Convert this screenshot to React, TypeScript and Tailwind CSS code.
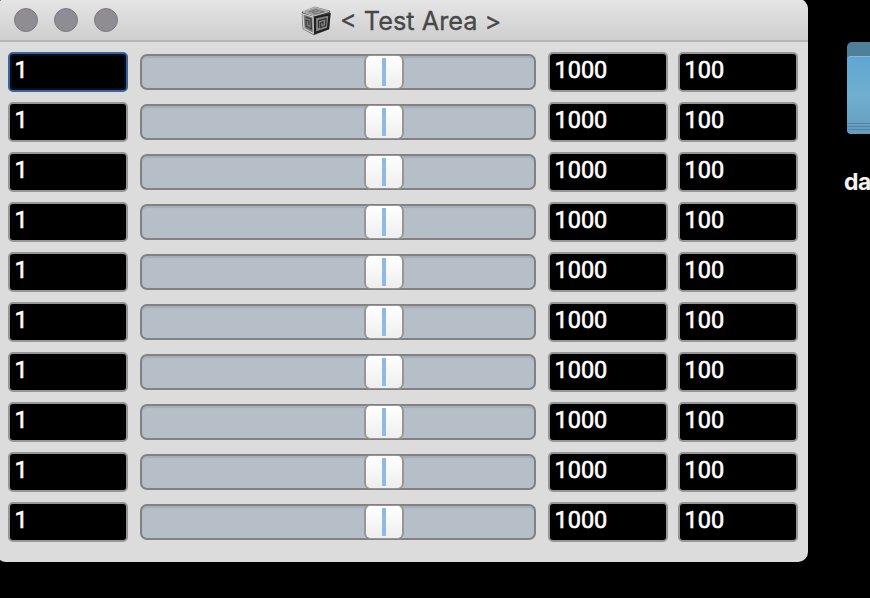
const rows = Array.from({ length: 10 }, (_, i) => i);

function NumberField({ value, focused = false }: { value: string; focused?: boolean }) {
  return (
    <div
      className={`flex h-10 w-[120px] shrink-0 items-start rounded-[5px] border-2 bg-black pl-[4.5px] ${
        focused ? "border-[#3c639f] shadow-[inset_0_0_0_2px_#071019]" : "border-[#969696]"
      }`}
    >
      <span className="pt-[3px] font-['Roboto','Liberation_Sans',sans-serif] text-[23.5px] leading-[27px] font-normal text-white [-webkit-text-stroke:0.6px_white]">
        {value}
      </span>
    </div>
  );
}

function Slider() {
  return (
    <div className="ml-3 flex h-9 w-[396px] shrink-0 rounded-[7px] border-2 border-[#828282] bg-[#b6bec8] pl-[222px] shadow-[inset_0_2px_1px_#a6aeb8]">
      <div className="-mt-px flex h-[34px] w-10 items-center justify-center rounded-[6px] border-x-2 border-y border-[#969696] bg-linear-to-b from-white to-[#eeeeee]">
        <div className="h-7 w-1 bg-[#91b9e8]" />
      </div>
    </div>
  );
}

function CubeIcon() {
  return (
    <svg width="32" height="32" viewBox="0 0 32 32" fill="none">
      <path d="M2 8 15 3 30 7 29 25 14 31 3 25Z" fill="#4c4c4c" stroke="#777" strokeWidth=".6" />
      <path d="M3 8 15 3.5 29 7.5 14 12Z" fill="#9c9c9c" stroke="#bcbcbc" strokeWidth="1" />
      <path d="M9 8 16 5.5 24 8 15 10 12 8 18 7.5" stroke="#6c6c6c" strokeWidth=".9" />
      <path d="M3 10 13 13 13.5 29.5 4 24.5Z" fill="#777" stroke="#d0d0d0" strokeWidth="1.3" />
      <path d="M5.5 13 11 15 11.5 25 6 22V16l3 1v4" stroke="#3c3c3c" strokeWidth="1.2" />
      <path d="M15 13.5 29.5 10.5 28 24.5 15 29Z" fill="#858585" stroke="#202020" strokeWidth="2.2" />
      <path d="M18.5 24V16.5l7.5-2-.5 7-5 2v-4.5l2.5-1v2.5" stroke="#353535" strokeWidth="1.3" />
    </svg>
  );
}

function TitleBar() {
  return (
    <div className="flex h-[43px] items-center border-b-2 border-[#b5b5b5] bg-linear-to-b from-[#e6e6e6] to-[#cecece] pl-[18px]">
      <div className="flex gap-4">
        {["close", "minimize", "zoom"].map((name) => (
          <div key={name} className="size-6 rounded-full border border-[#7c7b80] bg-[#8f8d93]" />
        ))}
      </div>
      <div className="ml-[182px] flex items-center gap-[8px]">
        <CubeIcon />
        <span className="pt-[2px] font-['Inter',sans-serif] text-[25.3px] leading-8 font-normal whitespace-pre text-[#474747] [-webkit-text-stroke:0.3px_#474747]">
          {"< Test Area >"}
        </span>
      </div>
    </div>
  );
}

function Folder() {
  return (
    <div className="ml-9 flex flex-col pt-[42px]">
      <div className="ml-[3px] h-[92px] w-[120px] rounded-[5px] bg-[#4f7f9b] pt-[14px]">
        <div className="flex h-[78px] flex-col justify-end gap-[2px] rounded-[4px] border-t border-[#82bcdf] bg-linear-to-b from-[#5ea7d5] via-[#71aed0] to-[#659cbd] pb-1">
          <div className="h-px bg-[#5084a5]" />
          <div className="h-px bg-[#5084a5]" />
          <div className="h-px bg-[#5084a5]" />
        </div>
      </div>
      <span className="mt-[32px] font-['Inter',sans-serif] text-[23px] leading-8 font-bold tracking-[-0.6px] text-[#f4f4f4]">
        da
      </span>
    </div>
  );
}

export default function App() {
  return (
    <div className="flex h-[598px] w-[870px] items-start overflow-hidden bg-black">
      <div className="-mt-px -ml-1 h-[563px] w-[812px] shrink-0 overflow-hidden rounded-[10px] bg-[#dcdcdc]">
        <TitleBar />
        <div className="flex flex-col gap-[10px] pt-[10px] pl-3">
          {rows.map((row) => (
            <div key={row} className="flex items-center">
              <NumberField value="1" focused={row === 0} />
              <Slider />
              <div className="ml-3 flex gap-[10px]">
                <NumberField value="1000" />
                <NumberField value="100" />
              </div>
            </div>
          ))}
        </div>
      </div>
      <Folder />
    </div>
  );
}
